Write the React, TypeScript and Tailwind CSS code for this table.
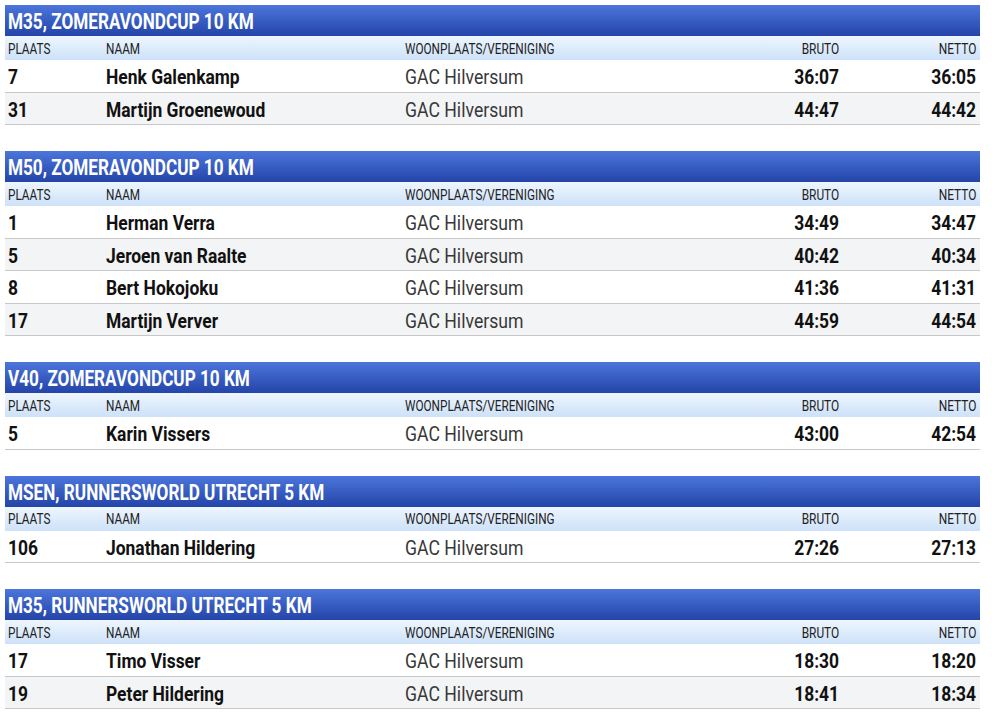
import React from "react";

type Row = { p: string; n: string; w: string; b: string; t: string };
type Sec = { title: string; rows: Row[] };

const G = "GAC Hilversum";
const data: Sec[] = [
  { title: "M35, ZOMERAVONDCUP 10 KM", rows: [
    { p: "7", n: "Henk Galenkamp", w: G, b: "36:07", t: "36:05" },
    { p: "31", n: "Martijn Groenewoud", w: G, b: "44:47", t: "44:42" },
  ]},
  { title: "M50, ZOMERAVONDCUP 10 KM", rows: [
    { p: "1", n: "Herman Verra", w: G, b: "34:49", t: "34:47" },
    { p: "5", n: "Jeroen van Raalte", w: G, b: "40:42", t: "40:34" },
    { p: "8", n: "Bert Hokojoku", w: G, b: "41:36", t: "41:31" },
    { p: "17", n: "Martijn Verver", w: G, b: "44:59", t: "44:54" },
  ]},
  { title: "V40, ZOMERAVONDCUP 10 KM", rows: [
    { p: "5", n: "Karin Vissers", w: G, b: "43:00", t: "42:54" },
  ]},
  { title: "MSEN, RUNNERSWORLD UTRECHT 5 KM", rows: [
    { p: "106", n: "Jonathan Hildering", w: G, b: "27:26", t: "27:13" },
  ]},
  { title: "M35, RUNNERSWORLD UTRECHT 5 KM", rows: [
    { p: "17", n: "Timo Visser", w: G, b: "18:30", t: "18:20" },
    { p: "19", n: "Peter Hildering", w: G, b: "18:41", t: "18:34" },
  ]},
];

function L({ children }: { children: React.ReactNode }) {
  return <span className="inline-block whitespace-nowrap origin-left scale-x-[0.84]">{children}</span>;
}
function LB({ children }: { children: React.ReactNode }) {
  return <span className="inline-block whitespace-nowrap origin-left scale-x-[0.83]">{children}</span>;
}
function RB({ children }: { children: React.ReactNode }) {
  return <span className="inline-block whitespace-nowrap origin-right scale-x-[0.83]">{children}</span>;
}
function R({ children }: { children: React.ReactNode }) {
  return <span className="inline-block whitespace-nowrap origin-right scale-x-[0.85]">{children}</span>;
}

function Section({ s }: { s: Sec }) {
  return (
    <div className="mb-[26px]">
      <div className="h-[31px] flex items-center pl-[3px] pt-[3px] text-white font-bold text-[22px] leading-none bg-gradient-to-b from-[#4c76dc] to-[#2444a8]">
        <span className="inline-block whitespace-nowrap origin-left scale-x-[0.78]">{s.title}</span>
      </div>
      <div className="h-[24px] flex items-center pt-[1px] text-[14px] leading-none text-[#222] bg-gradient-to-b from-[#eef6fe] to-[#cde1f8]">
        <div className="w-[101px] pl-[3px]"><L>PLAATS</L></div>
        <div className="w-[299px]"><L>NAAM</L></div>
        <div className="flex-1"><L>WOONPLAATS/VERENIGING</L></div>
        <div className="w-[120px] text-right pr-[4px]"><R>BRUTO</R></div>
        <div className="w-[137px] text-right pr-[4px]"><R>NETTO</R></div>
      </div>
      {s.rows.map((r, i) => (
        <div
          key={i}
          className={`h-[32.5px] flex items-center pt-[4px] border-b border-[#c8c8c8] text-[21px] leading-none ${i % 2 === 1 ? "bg-[#f3f4f5]" : "bg-white"}`}
        >
          <div className="w-[101px] pl-[3px] font-bold text-[#111]"><LB>{r.p}</LB></div>
          <div className="w-[299px] font-bold text-[#111]"><LB>{r.n}</LB></div>
          <div className="flex-1 text-[#383838]"><L>{r.w}</L></div>
          <div className="w-[120px] text-right pr-[4px] font-bold text-[#111]"><RB>{r.b}</RB></div>
          <div className="w-[137px] text-right pr-[4px] font-bold text-[#111]"><RB>{r.t}</RB></div>
        </div>
      ))}
    </div>
  );
}

export default function App() {
  return (
    <div className="w-[992px] h-[720px] overflow-hidden bg-white" style={{ fontFamily: "Roboto, 'Noto Sans', sans-serif" }}>
      <div className="pt-[5px] pl-[5px] w-[980px]">
        {data.map((s, i) => (
          <Section key={i} s={s} />
        ))}
      </div>
    </div>
  );
}
